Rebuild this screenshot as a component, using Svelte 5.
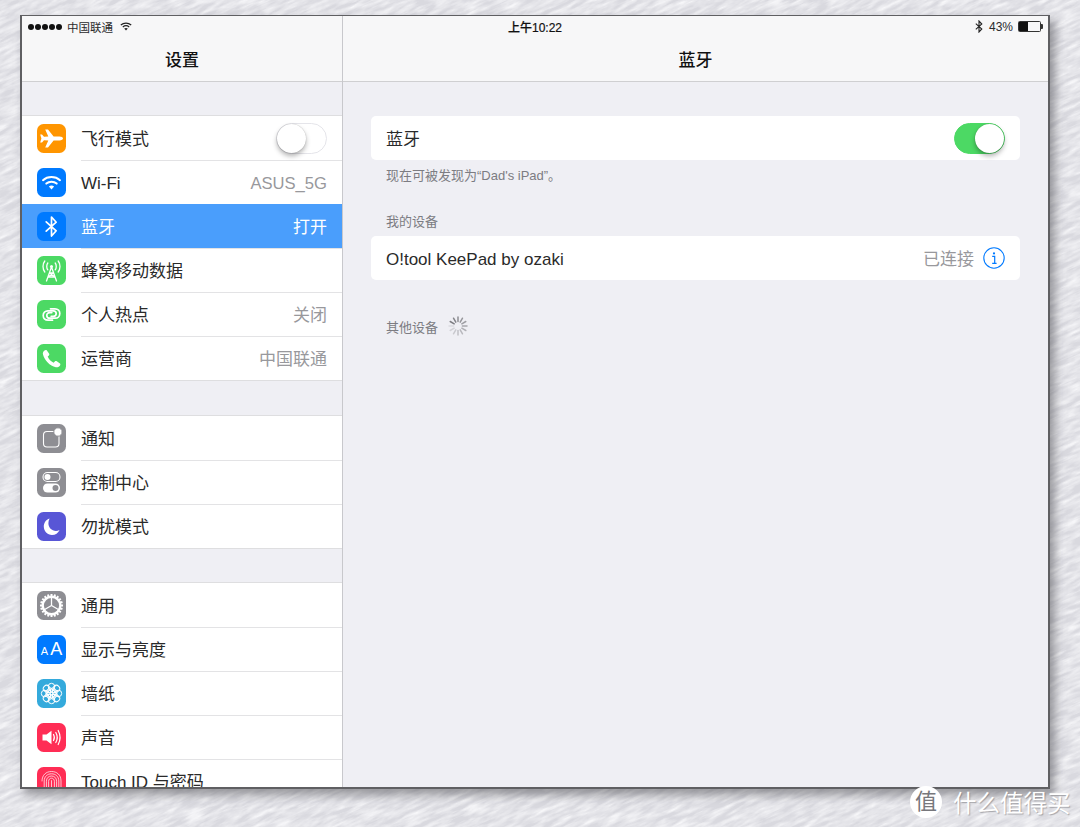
<script>
  const groups = [
    [
      { icon: 'plane', color: '#ff9500', label: '飞行模式', toggle: true },
      { icon: 'wifi', color: '#007aff', label: 'Wi-Fi', value: 'ASUS_5G', latin: true },
      { icon: 'bt', color: '#007aff', label: '蓝牙', value: '打开', active: true },
      { icon: 'cell', color: '#4cd964', label: '蜂窝移动数据' },
      { icon: 'hotspot', color: '#4cd964', label: '个人热点', value: '关闭' },
      { icon: 'phone', color: '#4cd964', label: '运营商', value: '中国联通' }
    ],
    [
      { icon: 'notify', color: '#8e8e93', label: '通知' },
      { icon: 'control', color: '#8e8e93', label: '控制中心' },
      { icon: 'moon', color: '#5856d6', label: '勿扰模式' }
    ],
    [
      { icon: 'gear', color: '#8e8e93', label: '通用' },
      { icon: 'aa', color: '#007aff', label: '显示与亮度' },
      { icon: 'flower', color: '#34aadc', label: '墙纸' },
      { icon: 'sound', color: '#ff2d55', label: '声音' },
      { icon: 'touch', color: '#ff2d55', label: 'Touch ID 与密码' }
    ]
  ];

  const petals = [0, 45, 90, 135, 180, 225, 270, 315];
  const teeth = Array.from({ length: 20 }, (_, i) => i * 18);
  const spokes = Array.from({ length: 12 }, (_, i) => i);
</script>

{#snippet glyph(name)}
  <svg class="glyph" viewBox="0 0 29 29" fill="none" stroke="#fff" stroke-linecap="round" stroke-linejoin="round">
    {#if name === 'plane'}
      <path fill="#fff" stroke="none" d="M8.2 5.5 L11 5.5 L16.6 12.6 L22.5 12.6 C24.6 12.6 26 13.5 26 14.5 C26 15.5 24.6 16.4 22.5 16.4 L16.6 16.4 L11 23.5 L8.2 23.5 L11.3 16.4 L7 16.2 L5 18.6 L3.2 18.6 L4.4 14.5 L3.2 10.4 L5 10.4 L7 12.8 L11.3 12.6 Z" />
    {:else if name === 'wifi'}
      <path stroke-width="2" d="M6 12.2 C10.6 8 18.4 8 23 12.2" />
      <path stroke-width="2" d="M9.3 15.6 C12.2 13 16.8 13 19.7 15.6" />
      <path fill="#fff" stroke="none" d="M14.5 21.4 L11.9 18.5 C13.4 17.3 15.6 17.3 17.1 18.5 Z" />
    {:else if name === 'bt'}
      <path stroke-width="1.7" d="M9.2 9.8 L19.2 18.8 L14.5 24 L14.5 5 L19.2 10.2 L9.2 19.2" />
    {:else if name === 'cell'}
      <path stroke-width="1.3" d="M14.5 11 L9.5 25 M14.5 11 L19.5 25 M12.5 17 L16.5 17 M11.2 21 L17.8 21 M12.5 17 L17.8 21 M16.5 17 L11.2 21" />
      <circle cx="14.5" cy="10.5" r="1.5" fill="#fff" stroke="none" />
      <path stroke-width="1.3" d="M10.8 7 C9.4 8.8 9.4 12 10.8 13.8 M18.2 7 C19.6 8.8 19.6 12 18.2 13.8" />
      <path stroke-width="1.3" d="M7.8 5 C5.4 8 5.4 13 7.8 16 M21.2 5 C23.6 8 23.6 13 21.2 16" />
    {:else if name === 'hotspot'}
      <path stroke-width="1.7" d="M15.5 20.2 L11 20.2 C8 20.2 6.2 18 6.2 15.6 C6.2 12.8 8.2 10.8 10.8 10.8 L16.2 10.8 C18 10.8 19.2 12.1 19.2 13.6 C19.2 15.2 18 16.4 16.2 16.4 L14.2 16.4" />
      <path stroke-width="1.7" d="M13.5 8.8 L18 8.8 C21 8.8 22.8 11 22.8 13.4 C22.8 16.2 20.8 18.2 18.2 18.2 L12.8 18.2 C11 18.2 9.8 16.9 9.8 15.4 C9.8 13.8 11 12.6 12.8 12.6 L14.8 12.6" />
    {:else if name === 'phone'}
      <path fill="#fff" stroke="none" d="M7.2 6.8 C8 6 9 5.8 9.7 6.3 L12 9.4 C12.5 10.1 12.4 10.9 11.9 11.4 L10.7 12.6 C11.8 15.4 13.9 17.5 16.6 18.7 L17.8 17.4 C18.3 16.9 19.1 16.8 19.8 17.2 L23 19.5 C23.6 20 23.5 21 22.7 21.9 C21.6 23.1 20.3 23.6 18.8 23.2 C12.8 21.6 7.6 16.4 6 10.4 C5.6 9 6.1 7.8 7.2 6.8 Z" />
    {:else if name === 'notify'}
      <rect x="6.5" y="7.5" width="15.5" height="15.5" rx="3.5" stroke-width="1.1" />
      <circle cx="21" cy="8" r="4.2" fill="#fff" stroke="#8e8e93" stroke-width="1" />
    {:else if name === 'control'}
      <rect x="6" y="4.5" width="17" height="9" rx="4.5" stroke-width="1.1" />
      <circle cx="10.5" cy="9" r="3" fill="#fff" stroke="none" />
      <rect x="6" y="15.5" width="17" height="9" rx="4.5" fill="#fff" stroke="none" />
      <circle cx="18.5" cy="20" r="3" fill="#8e8e93" stroke="none" />
    {:else if name === 'moon'}
      <path fill="#fff" stroke="none" d="M12.6 6.5 C9 7.6 6.8 10.8 6.8 14.6 C6.8 19.4 10.4 23 15 23 C18.4 23 21.2 21 22.6 18 C21.4 18.6 20.2 18.9 19 18.9 C14.6 18.9 11.4 15.4 11.4 11.2 C11.4 9.6 11.8 8 12.6 6.5 Z" />
    {:else if name === 'gear'}
      {#each teeth as t}
        <path stroke-width="2" stroke-linecap="butt" d="M14.5 3 L14.5 6" transform="rotate({t} 14.5 14.5)" />
      {/each}
      <circle cx="14.5" cy="14.5" r="8.8" stroke-width="2.4" />
      <path stroke-width="1.3" d="M14.5 14.5 L14.5 6 M14.5 14.5 L7.2 18.7 M14.5 14.5 L21.8 18.7" />
    {:else if name === 'flower'}
      {#each petals as p}
        <circle cx="14.5" cy="7.6" r="3.3" stroke-width="1" transform="rotate({p} 14.5 14.5)" />
        <circle cx="14.5" cy="11" r="2.3" stroke-width="0.9" transform="rotate({p + 22} 14.5 14.5)" />
      {/each}
    {:else if name === 'sound'}
      <path fill="#fff" stroke="none" d="M5.5 11.5 L9.5 11.5 L14.5 7.8 L14.5 21.2 L9.5 17.5 L5.5 17.5 Z" />
      <path stroke-width="1.2" d="M16.5 11.5 C17.6 13.4 17.6 15.6 16.5 17.5 M18.8 9.5 C20.6 12.6 20.6 16.4 18.8 19.5 M21.2 7.5 C23.6 12 23.6 17 21.2 21.5" />
    {:else if name === 'touch'}
      <g stroke-width="0.8" opacity="0.9">
        <path d="M5 14 C5 8 9 4.5 14.5 4.5 C20 4.5 24 8 24 14 L24 24" />
        <path d="M7.2 26 L7.2 14 C7.2 9.5 10.4 6.8 14.5 6.8 C18.6 6.8 21.8 9.5 21.8 14 L21.8 26" />
        <path d="M9.4 26 L9.4 14.2 C9.4 11 11.6 9 14.5 9 C17.4 9 19.6 11 19.6 14.2 L19.6 26" />
        <path d="M11.6 26 L11.6 14.4 C11.6 12.4 12.8 11.2 14.5 11.2 C16.2 11.2 17.4 12.4 17.4 14.4 L17.4 26" />
        <path d="M14.5 13.6 L14.5 26" />
      </g>
    {/if}
  </svg>
{/snippet}

<div class="page">
  <svg class="paper" width="1900" height="1900" aria-hidden="true">
    <filter id="grain" x="0" y="0" width="100%" height="100%">
      <feTurbulence type="fractalNoise" baseFrequency="0.05 0.24" numOctaves="4" seed="4" />
      <feColorMatrix values="0 0 0 0 0.93  0 0 0 0 0.93  0 0 0 0 0.95  1.3 1.3 0 0 -0.95" />
    </filter>
    <rect width="1900" height="1900" fill="#d9d9df" />
    <rect width="1900" height="1900" filter="url(#grain)" />
  </svg>

  <div class="window">
    <div class="status">
      <div class="status-left">
        <span class="dots">{#each [1, 2, 3, 4, 5] as d}<i></i>{/each}</span>
        <span>中国联通</span>
        <svg width="12" height="9" viewBox="0 0 12 9" fill="none" stroke="#222" stroke-width="1.2">
          <path d="M0.8 3 C3.8 0.4 8.2 0.4 11.2 3" />
          <path d="M2.8 5 C4.6 3.5 7.4 3.5 9.2 5" />
          <path fill="#222" stroke="none" d="M6 8.6 L4.2 6.6 C5.3 5.8 6.7 5.8 7.8 6.6 Z" />
        </svg>
      </div>
      <div class="status-time">上午10:22</div>
      <div class="status-right">
        <svg width="8" height="13" viewBox="0 0 8 13" fill="none" stroke="#222" stroke-width="1.1">
          <path d="M0.8 3.6 L6.8 9 L4 12 L4 1 L6.8 4 L0.8 9.4" />
        </svg>
        <span class="percent">43%</span>
        <span class="battery"><span class="battery-level" style="width: 43%"></span></span>
      </div>
    </div>

    <div class="panes">
      <aside class="sidebar">
        <header class="nav">设置</header>
        <div class="groups">
          {#each groups as group}
            <div class="group">
              {#each group as row}
                <div class="row" class:active={row.active}>
                  <div class="icon" style="background: {row.color}">
                    {#if row.icon === 'aa'}
                      <span class="aa"><small>A</small>A</span>
                    {:else}
                      {@render glyph(row.icon)}
                    {/if}
                  </div>
                  <div class="row-body" class:latin={row.latin}>
                    <span class="label">{row.label}</span>
                    {#if row.value}<span class="value">{row.value}</span>{/if}
                    {#if row.toggle}<span class="switch"></span>{/if}
                  </div>
                </div>
              {/each}
            </div>
          {/each}
        </div>
      </aside>

      <main class="detail">
        <header class="nav">蓝牙</header>
        <div class="content">
          <div class="card">
            <span class="card-title">蓝牙</span>
            <span class="switch on"></span>
          </div>
          <p class="note">现在可被发现为“Dad's iPad”。</p>

          <h2 class="section">我的设备</h2>
          <div class="card">
            <span class="card-title latin">O!tool KeePad by ozaki</span>
            <span class="connected">已连接</span>
            <svg class="info" width="22" height="22" viewBox="0 0 22 22">
              <circle cx="11" cy="11" r="10.2" fill="none" stroke="#007aff" stroke-width="1.1" />
              <circle cx="11" cy="6.4" r="1.1" fill="#007aff" />
              <path d="M9.2 9.3 H11.7 V16.2 M9.2 16.4 H13.6" fill="none" stroke="#007aff" stroke-width="1.2" />
            </svg>
          </div>

          <div class="others">
            <span>其他设备</span>
            <svg width="22" height="22" viewBox="0 0 22 22">
              {#each spokes as s}
                <line x1="11" y1="2" x2="11" y2="6.6" stroke="#7d7d82" stroke-width="1.5" stroke-linecap="round"
                  opacity={1 - s * 0.075} transform="rotate({s * 30 - 60} 11 11)" />
              {/each}
            </svg>
          </div>
        </div>
      </main>
    </div>
  </div>

  <div class="mark">
    <span class="mark-badge">值</span>
    <span class="mark-text">什么值得买</span>
  </div>
</div>

<style>
  :global(body) {
    margin: 0;
  }

  .page {
    position: relative;
    width: 1080px;
    height: 827px;
    padding: 15px 0 0 20px;
    box-sizing: border-box;
    overflow: hidden;
    font-family: "Liberation Sans", "Noto Sans CJK SC", sans-serif;
    color: #2a2a2a;
  }

  .paper {
    position: absolute;
    left: -410px;
    top: -540px;
    transform: rotate(-24deg);
  }

  .window {
    position: relative;
    width: 1030px;
    height: 774px;
    box-sizing: border-box;
    border: 2px solid #5f5f62;
    border-top-width: 1px;
    background: #efeff4;
    box-shadow: 5px 6px 9px rgba(70, 70, 76, 0.5);
  }

  .panes {
    display: flex;
    height: 100%;
    overflow: hidden;
  }

  .status {
    position: absolute;
    left: 0;
    right: 0;
    top: 0;
    height: 21px;
    padding: 0 4px 0 4px;
    display: grid;
    grid-template-columns: 1fr auto 1fr;
    align-items: center;
    font-size: 11.5px;
    color: #2a2a2c;
    z-index: 2;
  }

  .status-left {
    display: flex;
    align-items: center;
    gap: 5px;
    padding-left: 2px;
  }

  .dots {
    display: flex;
    gap: 1px;
  }

  .dots i {
    width: 6px;
    height: 6px;
    border-radius: 50%;
    background: #111;
  }

  .status-left svg {
    margin-left: 2px;
  }

  .status-time {
    font-size: 12px;
    font-weight: 500;
    color: #111;
    -webkit-text-stroke: 0.2px #111;
  }

  .status-right {
    display: flex;
    justify-content: flex-end;
    align-items: center;
    gap: 5px;
  }

  .percent {
    font-size: 12px;
    margin-left: 1px;
  }

  .battery {
    position: relative;
    width: 21px;
    height: 9px;
    border: 1px solid #333;
    border-radius: 1.5px;
    margin-right: 3px;
  }

  .battery::after {
    content: "";
    position: absolute;
    right: -3px;
    top: 2px;
    width: 2px;
    height: 5px;
    border-radius: 0 1px 1px 0;
    background: #333;
  }

  .battery-level {
    display: block;
    height: 100%;
    background: #111;
  }

  .sidebar {
    width: 320px;
    flex-shrink: 0;
    background: #efeff4;
    border-right: 1px solid #c8c8cc;
  }

  .detail {
    flex: 1;
    min-width: 0;
  }

  .nav {
    height: 66px;
    box-sizing: border-box;
    padding-top: 19px;
    display: flex;
    align-items: center;
    justify-content: center;
    background: #f7f7f8;
    border-bottom: 1px solid #cfcfd1;
    font-size: 17px;
    font-weight: 500;
    color: #111;
  }

  .groups {
    padding-top: 34px;
    display: flex;
    flex-direction: column;
    gap: 36px;
  }

  .group {
    background: #fff;
    box-shadow: 0 -1px 0 #dedee0, 0 1px 0 #dedee0;
  }

  .group:last-child {
    margin-top: -1px;
  }

  .row {
    display: flex;
    align-items: center;
    height: 44px;
    padding-left: 15px;
  }

  .row.active {
    position: relative;
    background: #4a9efc;
    color: #fff;
  }

  .icon {
    width: 29px;
    height: 29px;
    flex-shrink: 0;
    border-radius: 6.5px;
    display: flex;
    align-items: center;
    justify-content: center;
    overflow: hidden;
  }

  .glyph {
    width: 29px;
    height: 29px;
    display: block;
  }

  .aa {
    color: #fff;
    font-size: 18px;
    line-height: 1;
    font-family: "Liberation Sans", sans-serif;
  }

  .aa small {
    font-size: 11px;
    margin-right: 2px;
  }

  .row-body {
    flex: 1;
    height: 100%;
    box-sizing: border-box;
    margin-left: 15px;
    padding-right: 15px;
    padding-bottom: 2px;
    display: flex;
    align-items: center;
    justify-content: space-between;
    box-shadow: 0 1px 0 #e3e3e5;
    font-size: 17px;
  }

  .row-body.latin {
    padding-top: 6px;
    padding-bottom: 2px;
  }

  .row-body.latin .value {
    font-size: 16.6px;
  }

  .row:last-child .row-body {
    box-shadow: none;
  }

  .value {
    color: #98989c;
    font-size: 17px;
  }

  .active .value {
    color: #fff;
  }

  .switch {
    position: relative;
    display: block;
    width: 51px;
    height: 31px;
    box-sizing: border-box;
    border-radius: 16px;
    border: 1px solid #e5e5ea;
    background: #fff;
    top: 1px;
  }

  .switch::after {
    content: "";
    position: absolute;
    left: 0;
    top: 0;
    width: 29px;
    height: 29px;
    border-radius: 50%;
    background: #fff;
    box-shadow: 0 3px 5px rgba(0, 0, 0, 0.3), 0 0 1px rgba(0, 0, 0, 0.3);
  }

  .switch.on {
    background: #4cd964;
    border-color: #4cd964;
    top: 0;
  }

  .switch.on::after {
    left: 20px;
  }

  .content {
    padding: 34px 28px 0 28px;
  }

  .card {
    height: 44px;
    box-sizing: border-box;
    padding: 0 15px;
    display: flex;
    align-items: center;
    background: #fff;
    border-radius: 5px;
  }

  .card-title {
    flex: 1;
    font-size: 17px;
    padding-bottom: 2px;
  }

  .card-title.latin {
    padding-top: 4px;
    padding-bottom: 0;
  }

  .connected {
    color: #98989c;
    font-size: 17px;
    margin-right: 9px;
    padding-bottom: 2px;
  }

  .note {
    margin: 8px 0 0;
    padding-left: 15px;
    font-size: 13px;
    line-height: 16px;
    color: #7c7c82;
  }

  .section {
    margin: 30px 0 6px;
    padding-left: 15px;
    font-size: 13px;
    line-height: 16px;
    font-weight: 400;
    color: #7c7c82;
  }

  .others {
    margin-top: 35px;
    padding-left: 15px;
    display: flex;
    align-items: center;
    gap: 9px;
    font-size: 13px;
    color: #7c7c82;
  }

  .mark {
    position: absolute;
    left: 910px;
    top: 785px;
    display: flex;
    align-items: center;
    gap: 11px;
  }

  .mark-badge {
    width: 32px;
    height: 32px;
    border-radius: 50%;
    background: #fff;
    color: #77777c;
    font-size: 22px;
    line-height: 32px;
    text-align: center;
  }

  .mark-text {
    font-size: 23.5px;
    color: #fff;
    text-shadow: 1px 1px 1px rgba(90, 90, 96, 0.45);
  }
</style>
